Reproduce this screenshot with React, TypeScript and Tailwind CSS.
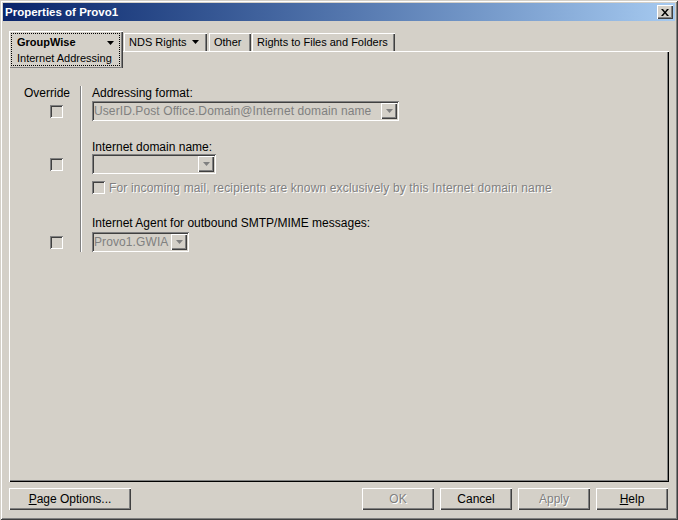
import React from 'react';

const raised = 'shadow-[inset_1px_1px_#ffffff,inset_-1px_-1px_#404040,inset_-2px_-2px_#808080]';
const sunken = 'shadow-[inset_1px_1px_#808080,inset_-1px_-1px_#ffffff,inset_2px_2px_#404040,inset_-2px_-2px_#d4d0c8]';
const etched = 'text-[#808080] [text-shadow:1px_1px_0_#ffffff]';
const tabEdge = 'shadow-[inset_1px_1px_#ffffff,inset_-1px_0_#404040,inset_-2px_0_#808080]';

function Arrow({ color = '#000000' }: { color?: string }) {
  return (
    <svg width="7" height="4" viewBox="0 0 7 4">
      <polygon points="0,0 7,0 3.5,4" fill={color} />
    </svg>
  );
}

function Check() {
  return <div className={`w-[13px] h-[13px] bg-[#d4d0c8] ${sunken}`} />;
}

function Select({ text, className }: { text: string; className: string }) {
  return (
    <div className={`flex items-center h-[20px] p-[2px] bg-[#d4d0c8] ${sunken} ${className}`}>
      <span className="flex-1 text-[#808080] whitespace-nowrap overflow-hidden tracking-[0.1px]">{text}</span>
      <span className={`w-[16px] h-[16px] flex items-center justify-center ${raised}`}>
        <Arrow color="#808080" />
      </span>
    </div>
  );
}

function Btn({ children, disabled, className = 'w-[72px]' }: { children: React.ReactNode; disabled?: boolean; className?: string }) {
  return (
    <div className={`h-[22px] flex items-center justify-center bg-[#d4d0c8] ${raised} ${className} ${disabled ? etched : 'text-black'}`}>
      {children}
    </div>
  );
}

export default function App() {
  return (
    <div className="w-[678px] h-[520px] p-[3px] bg-[#d4d0c8] shadow-[inset_1px_1px_#d4d0c8,inset_-1px_-1px_#404040,inset_2px_2px_#ffffff,inset_-2px_-2px_#808080] font-['Liberation_Sans',Arial,sans-serif] text-[12px] leading-[14px] text-black flex flex-col">
      {/* title bar */}
      <div className="h-[18px] flex items-center justify-between pl-[2px] pr-[2px] bg-linear-to-r from-[#0a246a] to-[#a6caf0]">
        <span className="text-white font-bold text-[11.5px]">Properties of Provo1</span>
        <div className={`w-[16px] h-[14px] flex items-center justify-center bg-[#d4d0c8] ${raised}`}>
          <svg width="8" height="7" viewBox="0 0 8 7">
            <path d="M0 0h2l2 2.5L6 0h2L5 3.5 8 7H6L4 4.5 2 7H0l3-3.5z" fill="#000000" />
          </svg>
        </div>
      </div>

      {/* tabs */}
      <div className="mt-[10px] h-[20px] flex items-start pl-[6px] text-[11px] leading-[13px]">
        <div className="relative z-10 w-[114px] h-[37px] bg-[#d4d0c8] shadow-[inset_1px_1px_#ffffff,inset_-1px_0_#404040,inset_-2px_0_#808080,inset_0_-1px_#808080] p-[2px] pr-[3px]">
          <div className="h-full border border-dotted border-black pl-[5px] pr-[5px] pt-[2px]">
            <div className="flex items-center justify-between font-bold">
              <span>GroupWise</span>
              <Arrow />
            </div>
            <div className="mt-[3px] whitespace-nowrap">Internet Addressing</div>
          </div>
        </div>
        <div className={`mt-[2px] ml-[1px] w-[83px] h-[18px] flex items-center pl-[5px] pr-[8px] justify-between whitespace-nowrap ${tabEdge}`}>
          <span>NDS Rights</span>
          <Arrow />
        </div>
        <div className={`mt-[2px] ml-[2px] w-[42px] h-[18px] flex items-center pl-[5px] ${tabEdge}`}>
          Other
        </div>
        <div className={`mt-[2px] ml-[1px] w-[143px] h-[18px] flex items-center pl-[5px] whitespace-nowrap ${tabEdge}`}>
          Rights to Files and Folders
        </div>
      </div>

      {/* panel */}
      <div className="mx-[6px] h-[431px] bg-[#d4d0c8] shadow-[inset_1px_1px_#ffffff,inset_-1px_-1px_#000000,inset_-2px_-2px_#808080] pl-[1px] pt-[35px]">
        {/* row A */}
        <div className="flex h-[35px]">
          <div className="w-[70px] flex flex-col justify-between pb-[3px]">
            <span className="pl-[14px]">Override</span>
            <div className="pl-[40px]"><Check /></div>
          </div>
          <div className="border-l border-[#808080] shadow-[inset_1px_0_#ffffff] pl-[11px]">
            <div>Addressing format:</div>
            <Select text="UserID.Post Office.Domain@Internet domain name" className="mt-[1px] w-[307px]" />
          </div>
        </div>
        {/* row B */}
        <div className="flex h-[53px]">
          <div className="w-[70px] flex items-end pb-[3px] pl-[40px]"><Check /></div>
          <div className="border-l border-[#808080] shadow-[inset_1px_0_#ffffff] pl-[11px] pt-[19px]">
            <div>Internet domain name:</div>
            <Select text="" className="w-[124px]" />
          </div>
        </div>
        {/* row B2 */}
        <div className="flex h-[20px]">
          <div className="w-[70px]" />
          <div className="border-l border-[#808080] shadow-[inset_1px_0_#ffffff] pl-[11px] pt-[7px] flex items-start gap-[4px]">
            <Check />
            <span className={`${etched} whitespace-nowrap tracking-[0.15px]`}>For incoming mail, recipients are known exclusively by this Internet domain name</span>
          </div>
        </div>
        {/* row C */}
        <div className="flex h-[58px]">
          <div className="w-[70px] flex items-end pb-[3px] pl-[40px]"><Check /></div>
          <div className="border-l border-[#808080] shadow-[inset_1px_0_#ffffff] pl-[11px] pt-[22px]">
            <div>Internet Agent for outbound SMTP/MIME messages:</div>
            <Select text="Provo1.GWIA" className="mt-[2px] w-[97px]" />
          </div>
        </div>
      </div>

      {/* buttons */}
      <div className="mt-[6px] mx-[6px] flex justify-between">
        <Btn className="w-[122px]"><span><span className="underline">P</span>age Options...</span></Btn>
        <div className="flex gap-[6px] mr-[1px]">
          <Btn disabled>OK</Btn>
          <Btn>Cancel</Btn>
          <Btn disabled>Apply</Btn>
          <Btn><span><span className="underline">H</span>elp</span></Btn>
        </div>
      </div>
    </div>
  );
}
